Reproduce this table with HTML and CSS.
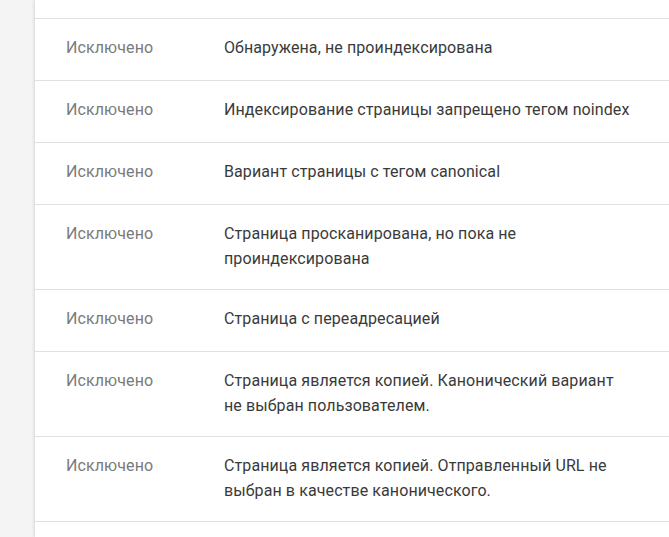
FILE: index.html
```html
<!DOCTYPE html>
<html lang="ru">
<head>
<meta charset="utf-8">
<link rel="stylesheet" href="styles.css">
</head>
<body>
<div class="page">
  <div class="card">
    <div class="top"></div>
    <div class="row"><div class="status">Исключено</div><div class="desc">Обнаружена, не проиндексирована</div></div>
    <div class="row"><div class="status">Исключено</div><div class="desc">Индексирование страницы запрещено тегом noindex</div></div>
    <div class="row"><div class="status">Исключено</div><div class="desc">Вариант страницы с тегом canonical</div></div>
    <div class="row"><div class="status">Исключено</div><div class="desc">Страница просканирована, но пока не<br>проиндексирована</div></div>
    <div class="row"><div class="status">Исключено</div><div class="desc">Страница с переадресацией</div></div>
    <div class="row"><div class="status">Исключено</div><div class="desc">Страница является копией. Канонический вариант<br>не выбран пользователем.</div></div>
    <div class="row"><div class="status">Исключено</div><div class="desc">Страница является копией. Отправленный URL не<br>выбран в качестве канонического.</div></div>
    <div class="row"></div>
  </div>
</div>
</body>
</html>
```
FILE: styles.css
```css
html, body {
  margin: 0;
  padding: 0;
  background: #f4f4f4;
  overflow: hidden;
}
.page {
  display: flex;
  height: 537px;
  padding-left: 35px;
}
.card {
  flex: 1;
  background: #ffffff;
  box-shadow: -1px 0 3px rgba(0, 0, 0, 0.12);
  font-family: Roboto, "Noto Sans", sans-serif;
  font-size: 16px;
  line-height: 25px;
  letter-spacing: 0.1px;
}
.top {
  height: 18px;
  border-bottom: 1px solid #e0e0e0;
}
.row {
  display: flex;
  box-sizing: border-box;
  min-height: 62px;
  padding: 16px 0 18px;
  border-bottom: 1px solid #e0e0e0;
}
.status {
  width: 158px;
  padding-left: 31px;
  color: #7a7a7a;
  flex-shrink: 0;
}
.desc {
  color: #3a3a3a;
}
```
